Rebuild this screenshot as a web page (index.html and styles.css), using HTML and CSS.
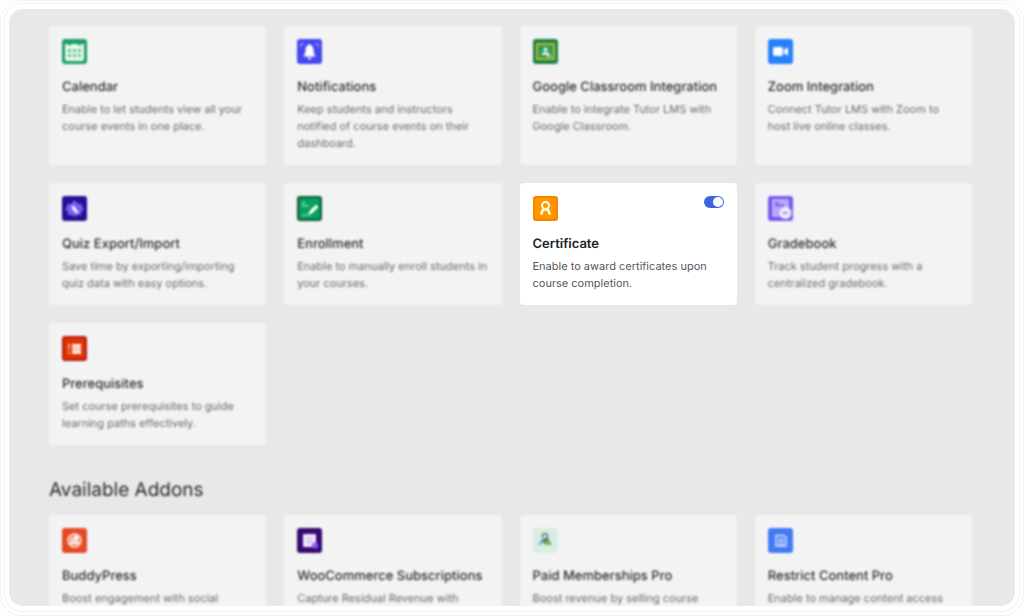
FILE: index.html
```
<!DOCTYPE html>
<html lang="en">
<head>
  <meta charset="UTF-8" />
  <meta name="viewport" content="width=device-width, initial-scale=1" />
  <title>Addons</title>
  <link rel="stylesheet" href="styles.css">
</head>
<body>
  <div class="frame">
    <div class="frame-inner">
      <main class="panel">
        <section class="addon-grid">
          <article class="card dimmed">
            <svg class="icon" viewBox="0 0 25 25">
              <rect width="25" height="25" rx="3" fill="#1f9d66"/>
              <path d="M3 5h3c0 2 3 2 3 0h7c0 2 3 2 3 0h3v15a2 2 0 0 1-2 2H5a2 2 0 0 1-2-2z" fill="#e3f8ec"/>
              <g fill="#6fbf98">
                <rect x="6" y="10" width="3" height="3"/><rect x="11" y="10" width="3" height="3"/><rect x="16" y="10" width="3" height="3"/>
                <rect x="6" y="15" width="3" height="3"/><rect x="11" y="15" width="3" height="3"/><rect x="16" y="15" width="3" height="3"/>
              </g>
            </svg>
            <h3>Calendar</h3>
            <p>Enable to let students view all your course events in one place.</p>
          </article>

          <article class="card dimmed">
            <svg class="icon" viewBox="0 0 25 25">
              <rect width="25" height="25" rx="3" fill="#4547ee"/>
              <path d="M12.500 6c-3 0-4 2.500-4 4.500 0 3.500-.8 5-2.200 7h12.400c-1.400-2-2.200-3.500-2.200-7 0-2-1-4.500-4-4.500z" fill="#fff"/>
              <path d="M10.500 18.500h4a2 2 0 0 1-4 0z" fill="#fff"/>
              <circle cx="12.500" cy="6" r="1" fill="#fff"/>
              <path d="M3 8c.5-2 1.500-3 3.500-4M22 8c-.5-2-1.500-3-3.500-4" fill="none" stroke="#9b9cf8" stroke-width="1.500"/>
            </svg>
            <h3>Notifications</h3>
            <p>Keep students and instructors notified of course events on their dashboard.</p>
          </article>

          <article class="card dimmed">
            <svg class="icon" viewBox="0 0 25 25">
              <rect width="25" height="25" rx="3" fill="#188546"/>
              <rect x="4" y="5" width="17" height="15" fill="#2b9d5b" stroke="#c5b52b" stroke-width="2"/>
              <circle cx="12.500" cy="10.500" r="2" fill="#e5f6e8"/>
              <path d="M8.500 16c0-2 2-3 4-3s4 1 4 3z" fill="#e5f6e8"/>
              <path d="M14 17h4" stroke="#e5f6e8" stroke-width="1.500"/>
            </svg>
            <h3>Google Classroom Integration</h3>
            <p>Enable to integrate Tutor LMS with Google Classroom.</p>
          </article>

          <article class="card dimmed">
            <svg class="icon" viewBox="0 0 25 25">
              <rect width="25" height="25" rx="3" fill="#2681fa"/>
              <rect x="5" y="8" width="10" height="9" rx="2" fill="#fff"/>
              <path d="M16 11l4-3v9l-4-3z" fill="#fff"/>
            </svg>
            <h3>Zoom Integration</h3>
            <p>Connect Tutor LMS with Zoom to host live online classes.</p>
          </article>

          <article class="card dimmed">
            <svg class="icon" viewBox="0 0 25 25">
              <rect width="25" height="25" rx="3" fill="#271095"/>
              <path d="M12.500 4l3.500 4h4v3l2 2-3 3v3h-4l-2.500 2-2.500-2H6v-3l-3-3 2-2V8h4z" fill="#7560f2"/>
              <path d="M9.500 9.500l3 1 4 6-2 1-4-4z" fill="#fff"/>
            </svg>
            <h3>Quiz Export/Import</h3>
            <p>Save time by exporting/importing quiz data with easy options.</p>
          </article>

          <article class="card dimmed">
            <svg class="icon" viewBox="0 0 25 25">
              <rect width="25" height="25" rx="3" fill="#095c39"/>
              <rect x="2" y="2" width="21" height="21" rx="2" fill="#07a05f"/>
              <path d="M5 5l3 1v3h4v2H5z" fill="#5cc597"/>
              <path d="M5 19h8" stroke="#5cc597" stroke-width="2"/>
              <path d="M12 18l1-3 6-6 2 2-6 6z" fill="#f5fff5" stroke="#f5fff5" stroke-width="1"/>
            </svg>
            <h3>Enrollment</h3>
            <p>Enable to manually enroll students in your courses.</p>
          </article>

          <article class="card">
            <input class="toggle" type="checkbox" id="certificate" checked>
            <svg class="icon" viewBox="0 0 25 25">
              <rect width="25" height="25" rx="3" fill="#f98200"/>
              <rect x="2" y="2" width="21" height="21" rx="2" fill="#ff9800"/>
              <circle cx="12.500" cy="9.500" r="3.500" fill="none" stroke="#fffbe0" stroke-width="2"/>
              <path d="M10.500 12.500L8 18.500M14.500 12.500L17 18.500" stroke="#fffbe0" stroke-width="2.500"/>
              <path d="M10 13l2.500 2 2.500-2" fill="none" stroke="#fffbe0" stroke-width="1"/>
            </svg>
            <h3><label for="certificate">Certificate</label></h3>
            <p>Enable to award certificates upon course completion.</p>
          </article>

          <article class="card dimmed">
            <svg class="icon" viewBox="0 0 25 25">
              <rect width="25" height="25" rx="3" fill="#7757ed"/>
              <rect x="4" y="3" width="17" height="18" rx="1" fill="#b9a8fa"/>
              <path d="M7 7h4M7 9.500h9" stroke="#6a4ade" stroke-width="1.500"/>
              <circle cx="17.500" cy="17" r="6" fill="#f3efff"/>
              <path d="M14.500 17h6M16.500 15.500v3" stroke="#a08de9" stroke-width="1.500"/>
            </svg>
            <h3>Gradebook</h3>
            <p>Track student progress with a centralized gradebook.</p>
          </article>

          <article class="card dimmed">
            <svg class="icon" viewBox="0 0 25 25">
              <rect width="25" height="25" rx="3" fill="#b91919"/>
              <rect x="2" y="2" width="21" height="21" rx="2" fill="#df3300"/>
              <path d="M10 9.500h9M10 13h9M10 16.500h9" stroke="#fff0e8" stroke-width="3"/>
              <path d="M6 9h2M7 8v4M6 13.500h2M6 17h2" stroke="#ffc4ae" stroke-width="1.500"/>
            </svg>
            <h3>Prerequisites</h3>
            <p>Set course prerequisites to guide learning paths effectively.</p>
          </article>
        </section>

        <h2 class="section-title">Available Addons</h2>

        <section class="addon-grid">
          <article class="card dimmed">
            <svg class="icon" viewBox="0 0 25 25">
              <rect width="25" height="25" rx="3" fill="#e44b25"/>
              <circle cx="12.500" cy="12.500" r="6.500" fill="#ee8065" stroke="#ffe3db" stroke-width="1.500"/>
              <circle cx="14" cy="10" r="2.500" fill="#fff"/>
              <circle cx="10" cy="11.500" r="1.500" fill="#fff"/>
              <path d="M7 16c1-3 4-3 5-2 2-2 5-1 6 2z" fill="#fff"/>
            </svg>
            <h3>BuddyPress</h3>
            <p>Boost engagement with social</p>
          </article>

          <article class="card dimmed">
            <svg class="icon" viewBox="0 0 25 25">
              <rect width="25" height="25" rx="3" fill="#360a70"/>
              <rect x="6" y="6" width="13" height="13" rx="1" fill="#eee5ff"/>
              <path d="M10 11.500c1-2 4-2 5 0M15 13c-1 2-4 2-5 0" fill="none" stroke="#a58bd2" stroke-width="1"/>
              <circle cx="18" cy="17.500" r="3" fill="#8f5bff"/>
            </svg>
            <h3>WooCommerce Subscriptions</h3>
            <p>Capture Residual Revenue with</p>
          </article>

          <article class="card dimmed">
            <svg class="icon" viewBox="0 0 25 25">
              <rect width="25" height="25" rx="3" fill="#d9eee2"/>
              <path d="M9.500 10V8a2.500 2.500 0 0 1 5 0v3" fill="none" stroke="#6c7479" stroke-width="1.500"/>
              <path d="M8 12l6-3 5 8-9-3z" fill="#5d7a7b"/>
              <path d="M11 14l5-1 3 4h-7z" fill="#83b83e"/>
              <path d="M6 17l3-4 3 3" fill="none" stroke="#4b9eca" stroke-width="1.500"/>
            </svg>
            <h3>Paid Memberships Pro</h3>
            <p>Boost revenue by selling course</p>
          </article>

          <article class="card dimmed">
            <svg class="icon" viewBox="0 0 25 25">
              <rect width="25" height="25" rx="3" fill="#4379f2"/>
              <path d="M8 7.500h8l2 2v8.500H8z" fill="none" stroke="#dce7ff" stroke-width="1.500"/>
              <path d="M11.500 18v-7h2a2 2 0 0 1 1 3.500V18" fill="none" stroke="#dce7ff" stroke-width="1.500"/>
            </svg>
            <h3>Restrict Content Pro</h3>
            <p>Enable to manage content access</p>
          </article>
        </section>
      </main>
    </div>
  </div>
</body>
</html>
```
FILE: styles.css
```
:root {
  --panel-bg: #e8e8e8;
  --card-bg: #ffffff;
  --card-dimmed: #f3f3f3;
  --title: #212327;
  --text: #54575d;
  --primary: #3e64de;
}

*, *::before, *::after { box-sizing: border-box; }

body {
  margin: 0;
  height: 100vh;
  font-family: Inter, "Liberation Sans", sans-serif;
  text-rendering: geometricPrecision;
  background: #fff;
  color: var(--title);
}

h2, h3, p { margin: 0; }

.frame {
  height: 100%;
  padding: 2px 3px 3px;
  border: 1px solid #f3f3f3;
  border-radius: 22px;
}

.frame-inner {
  height: 100%;
  padding: 5px 4px;
  border: 1px solid #f0f0f0;
  border-radius: 18px;
}

.panel {
  height: 100%;
  overflow: hidden;
  padding: 17px 43px 0 40px;
  border-radius: 14px;
  background: var(--panel-bg);
}

.addon-grid {
  display: grid;
  grid-template-columns: repeat(4, 1fr);
  gap: 18px;
}

.card {
  padding: 13px;
  border-radius: 4px;
  background: var(--card-bg);
}

.card.dimmed {
  background: var(--card-dimmed);
  filter: blur(1px);
}

.icon {
  display: block;
  width: 25px;
  height: 25px;
}

.card h3 {
  margin: 14px 0 5px;
  font-size: 13px;
  line-height: 18px;
  font-weight: 600;
}

.card p {
  font-size: 11px;
  line-height: 17px;
  color: var(--text);
}

.card.dimmed h3 {
  font-weight: 500;
  color: #2c2c2e;
}

.card.dimmed p { color: #68696c; }

.toggle {
  float: right;
  appearance: none;
  width: 20px;
  height: 12px;
  margin: 0;
  padding: 1px;
  border-radius: 6px;
  background: #c3c5cb;
  cursor: pointer;
}

.toggle::before {
  content: "";
  display: block;
  width: 10px;
  height: 10px;
  border-radius: 50%;
  background: #fff;
}

.toggle:checked { background: var(--primary); }
.toggle:checked::before { margin-left: auto; }

.section-title {
  margin: 32px 0 12px;
  font-size: 19px;
  line-height: 26px;
  font-weight: 400;
  color: #28292c;
  filter: blur(1px);
}
```
